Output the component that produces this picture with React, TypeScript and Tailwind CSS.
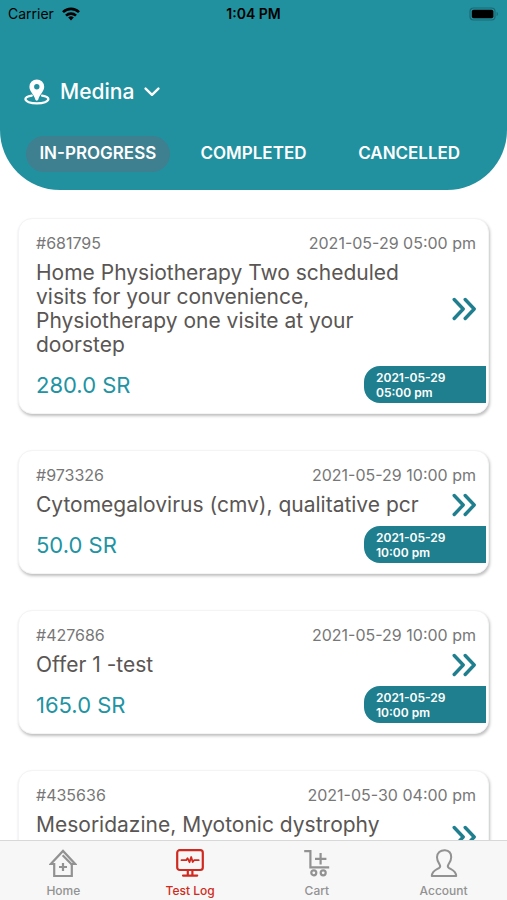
import React, { useState } from 'react';

interface Order {
  id: string;
  title: string;
  date: string;
  time: string;
  price?: string;
}

const orders: Order[] = [
  {
    id: '681795',
    title: 'Home Physiotherapy Two scheduled visits for your convenience, Physiotherapy one visite at your doorstep',
    date: '2021-05-29',
    time: '05:00 pm',
    price: '280.0',
  },
  { id: '973326', title: 'Cytomegalovirus (cmv), qualitative pcr', date: '2021-05-29', time: '10:00 pm', price: '50.0' },
  { id: '427686', title: 'Offer 1 -test', date: '2021-05-29', time: '10:00 pm', price: '165.0' },
  { id: '435636', title: 'Mesoridazine, Myotonic dystrophy', date: '2021-05-30', time: '04:00 pm' },
];

const tabs = ['IN-PROGRESS', 'COMPLETED', 'CANCELLED'];

const WifiIcon = () => (
  <svg width="18" height="14" viewBox="0 0 18 14" fill="none" stroke="black" strokeWidth="2.6">
    <path d="M1 5.1a11.5 11.5 0 0 1 16 0" />
    <path d="M4 8.6a7.2 7.2 0 0 1 10 0" />
    <path d="M9 13.4 6.2 10.6a4 4 0 0 1 5.6 0z" fill="black" stroke="none" />
  </svg>
);

const BatteryIcon = () => (
  <svg width="30" height="14" viewBox="0 0 30 14" fill="none">
    <rect x="1" y="1" width="25" height="12" rx="3.5" stroke="#196a75" strokeWidth="1.2" />
    <rect x="2.8" y="2.8" width="21.6" height="8.4" rx="1.8" fill="black" />
    <path d="M27.6 4.8c1.8.8 1.8 3.6 0 4.4z" fill="#196a75" />
  </svg>
);

const PinIcon = () => (
  <svg width="26" height="26" viewBox="0 0 26 26" fill="none">
    <path
      fillRule="evenodd"
      fill="white"
      d="M12.8.4a7.4 7.4 0 0 1 7.4 7.4c0 4.6-4.6 7.4-6 13-.3 1.1-2.5 1.1-2.8 0-1.400-5.600-6-8.400-6-13A7.400 7.400 0 0 1 12.800.4zm0 4.700a2.700 2.700 0 1 0 0 5.400 2.700 2.700 0 0 0 0-5.400z"
    />
    <path
      d="M7.800 16.600C4 17.200 1.400 18.500 1.400 20.100c0 2.500 5.100 4.300 11.500 4.300s11.500-1.800 11.500-4.300c0-1.600-2.600-2.900-6.400-3.500"
      stroke="white"
      strokeWidth="2.2"
      strokeLinecap="round"
    />
  </svg>
);

const ChevronDown = () => (
  <svg width="16" height="10" viewBox="0 0 16 10" fill="none" stroke="white" strokeWidth="2.4" strokeLinecap="round" strokeLinejoin="round">
    <path d="m1.6 1.6 6.400 6.200 6.400-6.200" />
  </svg>
);

const DoubleChevron = () => (
  <svg width="24" height="24" viewBox="0 0 24 24" fill="none" stroke="#1f7f8e" strokeWidth="3.4" strokeLinecap="round" strokeLinejoin="round">
    <path d="m2.200 2.500 9 9.500-9 9.500M13.200 2.500l9 9.500-9 9.500" />
  </svg>
);

const HomeIcon = () => (
  <svg width="28" height="28" viewBox="0 0 28 28" fill="none" stroke="currentColor" strokeWidth="2.2">
    <path d="M13 27H5.200V15H1.800L14 1.900 26.200 15h-3.400v12h-9.800" />
    <path d="M13.600 6.200 22.800 15.600" />
    <path d="M14 14v8M10 18h8" />
  </svg>
);

const MonitorIcon = () => (
  <svg width="28" height="28" viewBox="0 0 28 28" fill="none" stroke="currentColor" strokeWidth="2.2" strokeLinecap="round" strokeLinejoin="round">
    <rect x="1.200" y="1.200" width="25.600" height="19.800" rx="2.500" />
    <path d="M5.500 11.200h4.700l1.300-2 2 4 1.700-5.200 1.500 5 1.300-1.800h4.700" strokeWidth="1.800" />
    <path d="M11.800 21.500v4.500M16.400 21.500v4.500M7 26.600h14.200" />
  </svg>
);

const CartIcon = () => (
  <svg width="28" height="28" viewBox="0 0 28 28" fill="none" stroke="currentColor" strokeWidth="2.200">
    <path d="M1.200 2.200h6.200v16.200h18.800" />
    <path d="M17.600 4v11.500M12 9.800h11.400" />
    <circle cx="10.800" cy="23.800" r="2.500" />
    <circle cx="20.200" cy="23.800" r="2.500" />
  </svg>
);

const AccountIcon = () => (
  <svg width="28" height="28" viewBox="0 0 28 28" fill="none" stroke="currentColor" strokeWidth="2" strokeLinejoin="round">
    <path d="M15 1.200c-4.600-.2-8 2.600-8 7 0 3.400 1.300 5.200 2.600 7.200.7 1.200.6 2.800-.4 3.500-2.400 1.600-7.200 2.600-7.400 8.100h24.400c-.2-5.500-5-6.500-7.400-8.100-1-.7-1.100-2.300-.4-3.500 1.300-2 2.800-3.800 2.800-7.200 0-4-2.200-6.800-6.200-7z" />
  </svg>
);

const navItems = [
  { label: 'Home', Icon: HomeIcon },
  { label: 'Test Log', Icon: MonitorIcon },
  { label: 'Cart', Icon: CartIcon },
  { label: 'Account', Icon: AccountIcon },
];

const OrderCard: React.FC<{ order: Order }> = ({ order }) => (
  <article className="rounded-[14px] border border-gray-100 bg-white pt-3 pb-[10px] pl-[17px] shadow-[1px_2px_3px_rgba(0,0,0,0.25)]">
    <div className="flex justify-between pr-3 text-base leading-6 text-[#777777]">
      <span>#{order.id}</span>
      <time>{order.date} {order.time}</time>
    </div>
    <div className={`mt-[6px] flex items-center justify-between gap-5 pr-3 ${order.price ? '' : 'min-h-12'}`}>
      <h2 className={`text-[21px] leading-6 text-[#5a5654] ${order.price ? '' : 'self-start'}`}>{order.title}</h2>
      <button aria-label={`Open order ${order.id}`} className="shrink-0">
        <DoubleChevron />
      </button>
    </div>
    {order.price && (
      <div className="mt-[9px] flex items-center justify-between pr-[2px]">
        <span className="text-[22px] leading-6 text-[#2193a3]">{order.price} SR</span>
        <div className="flex h-[37px] w-[122px] flex-col justify-center rounded-l-2xl bg-[#1f7f8e] pl-3 text-xs leading-[15px] font-semibold text-white">
          <span>{order.date}</span>
          <span>{order.time}</span>
        </div>
      </div>
    )}
  </article>
);

const App: React.FC = () => {
  const [activeTab, setActiveTab] = useState('IN-PROGRESS');
  const [activeNav, setActiveNav] = useState('Test Log');

  return (
    <div className="flex h-screen flex-col bg-white font-['Inter',sans-serif]">
      <header className="shrink-0 rounded-b-[60px] bg-[#22919f] pb-[18px]">
        <div className="grid h-7 grid-cols-3 items-center px-2 text-sm text-black">
          <div className="flex items-center gap-2">
            <span>Carrier</span>
            <WifiIcon />
          </div>
          <span className="text-center font-semibold">1:04 PM</span>
          <div className="flex justify-end">
            <BatteryIcon />
          </div>
        </div>

        <button className="mt-12 ml-6 flex h-8 items-center gap-[10px] text-[21px] font-medium text-white">
          <PinIcon />
          <span>Medina</span>
          <ChevronDown />
        </button>

        <div className="mt-7 grid grid-cols-3 px-5">
          {tabs.map((tab) => (
            <button
              key={tab}
              onClick={() => setActiveTab(tab)}
              className={`mx-[6px] h-9 rounded-full text-[17px] font-semibold text-white ${activeTab === tab ? 'bg-[#3e7f90]' : ''}`}
            >
              {tab}
            </button>
          ))}
        </div>
      </header>

      <main className="min-h-0 flex-1 space-y-9 overflow-y-auto px-[18px] pt-7 [scrollbar-width:none]">
        {orders.map((order) => (
          <OrderCard key={order.id} order={order} />
        ))}
      </main>

      <nav className="grid shrink-0 grid-cols-4 border-t border-[#d8d8d8] bg-[#f7f7f7] pt-2">
        {navItems.map(({ label, Icon }) => (
          <button
            key={label}
            onClick={() => setActiveNav(label)}
            className={`flex flex-col items-center gap-[6px] pb-[1px] text-xs font-medium ${activeNav === label ? 'text-[#d02a20]' : 'text-[#929292]'}`}
          >
            <Icon />
            <span>{label}</span>
          </button>
        ))}
      </nav>
    </div>
  );
};

export default App;
